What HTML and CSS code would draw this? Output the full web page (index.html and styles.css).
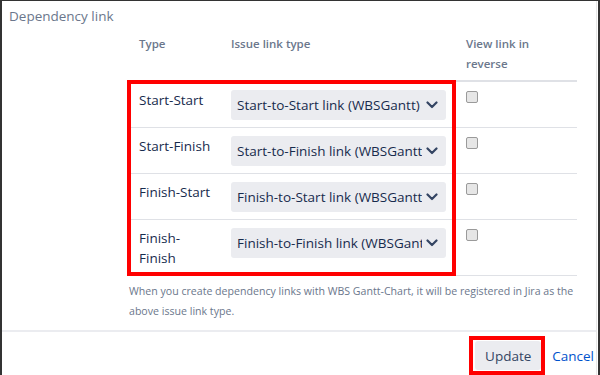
FILE: index.html
```html
<!DOCTYPE html>
<html>
<head>
<meta charset="utf-8">
<link rel="stylesheet" href="styles.css">
</head>
<body>
<div class="frame">
  <div class="panel">
    <h2 class="title">Dependency link</h2>
    <div class="content">
      <table class="links">
        <thead>
          <tr>
            <th class="c-type">Type</th>
            <th class="c-link">Issue link type</th>
            <th class="c-rev">View link in reverse</th>
          </tr>
        </thead>
        <tbody>
          <tr>
            <td class="label">Start-Start</td>
            <td><div class="select"><span class="sel-text">Start-to-Start link (WBSGantt)</span><svg class="chev" width="12" height="8" viewBox="0 0 12 8"><path d="M1.5 1.5 L6 6 L10.5 1.5" fill="none" stroke="#344563" stroke-width="2.2" stroke-linecap="round" stroke-linejoin="round"/></svg></div></td>
            <td><span class="check"></span></td>
          </tr>
          <tr>
            <td class="label">Start-Finish</td>
            <td><div class="select"><span class="sel-text">Start-to-Finish link (WBSGantt)</span><svg class="chev" width="12" height="8" viewBox="0 0 12 8"><path d="M1.5 1.5 L6 6 L10.5 1.5" fill="none" stroke="#344563" stroke-width="2.2" stroke-linecap="round" stroke-linejoin="round"/></svg></div></td>
            <td><span class="check"></span></td>
          </tr>
          <tr>
            <td class="label">Finish-Start</td>
            <td><div class="select"><span class="sel-text">Finish-to-Start link (WBSGantt)</span><svg class="chev" width="12" height="8" viewBox="0 0 12 8"><path d="M1.5 1.5 L6 6 L10.5 1.5" fill="none" stroke="#344563" stroke-width="2.2" stroke-linecap="round" stroke-linejoin="round"/></svg></div></td>
            <td><span class="check"></span></td>
          </tr>
          <tr>
            <td class="label">Finish-<br>Finish</td>
            <td><div class="select"><span class="sel-text">Finish-to-Finish link (WBSGantt)</span><svg class="chev" width="12" height="8" viewBox="0 0 12 8"><path d="M1.5 1.5 L6 6 L10.5 1.5" fill="none" stroke="#344563" stroke-width="2.2" stroke-linecap="round" stroke-linejoin="round"/></svg></div></td>
            <td><span class="check"></span></td>
          </tr>
        </tbody>
      </table>
      <div class="mark mark-table"></div>
      <p class="note">When you create dependency links with WBS Gantt-Chart, it will be registered in Jira as the above issue link type.</p>
    </div>
    <div class="footer">
      <span class="mark-btn"><button class="btn">Update</button></span>
      <a class="cancel" href="#">Cancel</a>
    </div>
  </div>
</div>
</body>
</html>
```
FILE: styles.css
```css
* { box-sizing: border-box; }
html, body { margin: 0; padding: 0; background: #fff; }
body {
  font-family: "Open Sans", "Noto Sans", sans-serif;
  color: #172b4d;
}
.frame {
  width: 600px;
  height: 375px;
  border-top: 1px solid #333;
  border-left: 2px solid #333;
  border-right: 2px solid #333;
  padding-right: 1px;
  overflow: hidden;
}
.panel {
  height: 100%;
  border-right: 1px solid #e6e6e6;
}
.title {
  margin: 0;
  padding: 5px 0 0 7px;
  font-size: 13.5px;
  line-height: 20px;
  font-weight: normal;
  color: #6b778c;
}
.content {
  position: relative;
  padding-left: 127px;
  padding-top: 8px;
}
.links {
  border-collapse: collapse;
  width: 448px;
  table-layout: fixed;
}
.c-type { width: 92px; }
.c-link { width: 235px; }
.c-rev { width: 121px; }
th {
  text-align: left;
  vertical-align: top;
  font-weight: 600;
  font-size: 11.5px;
  line-height: 20px;
  color: #6b778c;
  padding: 0 10px 6px 10px;
  border-bottom: 2px solid #dfe1e6;
}
td {
  vertical-align: top;
  padding: 8px 10px 7px 10px;
  border-bottom: 1px solid #dfe1e6;
  font-size: 13.5px;
  line-height: 20px;
}
.label { color: #172b4d; }
.select {
  display: flex;
  align-items: center;
  height: 30px;
  width: 215px;
  background: #ebecf0;
  border-radius: 3px;
  padding: 0 8px 0 6px;
}
.sel-text {
  flex: 1;
  min-width: 0;
  white-space: nowrap;
  overflow: hidden;
  text-overflow: clip;
  margin-right: 4px;
  font-size: 13.5px;
  color: #172b4d;
}
.chev { flex: none; display: block; }
.check {
  display: block;
  width: 12px;
  height: 12px;
  margin-top: 1px;
  border: 1px solid #9a9a9a;
  border-radius: 2px;
  background: #e6e6e6;
}
.mark {
  position: absolute;
  border: 4px solid #ff0000;
}
.mark-table {
  left: 125px;
  top: 54px;
  width: 329px;
  height: 196px;
}
.note {
  margin: 5px 0 9px 0;
  font-size: 10.6px;
  line-height: 20px;
  color: #6b778c;
  width: 450px;
}
.footer {
  border-top: 2px solid #ebecf0;
  display: flex;
  justify-content: flex-end;
  align-items: center;
  padding: 4px 2px 0 0;
}
.mark-btn {
  display: inline-flex;
  border: 4px solid #ff0000;
  padding: 1px 0 1px 2px;
}
.btn {
  font-family: inherit;
  font-size: 13.5px;
  color: #344563;
  background: #ebecf0;
  border: none;
  border-radius: 3px;
  width: 66px;
  height: 29px;
  padding: 0;
}
.cancel {
  margin-left: 7px;
  font-size: 13.5px;
  color: #0052cc;
  text-decoration: none;
}
```
